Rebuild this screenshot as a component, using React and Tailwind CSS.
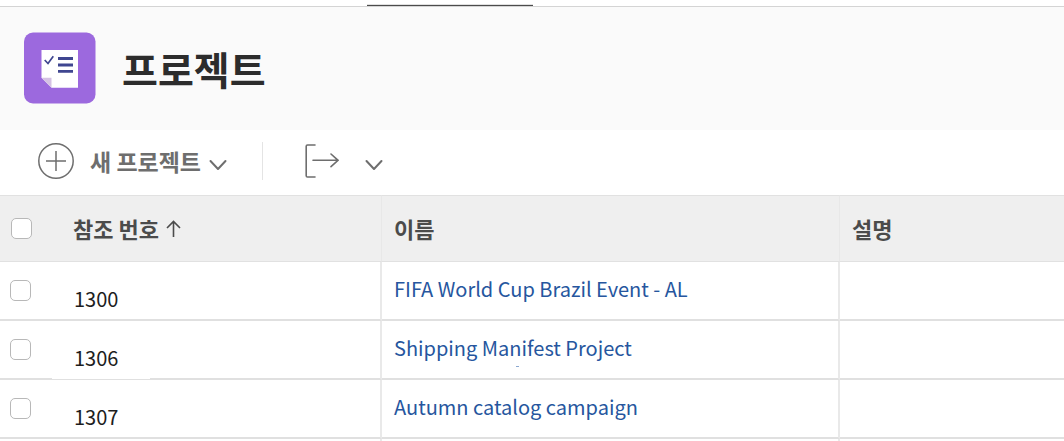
const rows = [
  { ref: "1300", name: "FIFA World Cup Brazil Event - AL" },
  { ref: "1306", name: "Shipping Manifest Project", marked: true },
  { ref: "1307", name: "Autumn catalog campaign" },
];

function ProjectIcon() {
  return (
    <svg className="size-[72px] shrink-0" viewBox="0 0 72 72" aria-hidden="true">
      <rect y="0.5" width="71.5" height="71" rx="9" fill="#9c69de" />
      <path d="M17.5 18H54v37.7H27.5l-10-10z" fill="#fff" />
      <path d="M17.5 45.7h10v10z" fill="#d5c2e4" />
      <path d="M20.7 28l3.3 3.5 5.3-7.2" fill="none" stroke="#3f4690" strokeWidth="1.7" />
      <path d="M34 26.5h15M34 33h15M34 39.3h15" stroke="#3f4690" strokeWidth="2.8" />
    </svg>
  );
}

function Chevron() {
  return (
    <svg className="mt-2 h-3 w-[18px]" viewBox="0 0 18 12" fill="none" stroke="#6e6e6e" strokeWidth="2" strokeLinecap="round" strokeLinejoin="round" aria-hidden="true">
      <path d="M1.5 2L9 10l7.5-8" />
    </svg>
  );
}

function Tick({ label }) {
  return (
    <input
      type="checkbox"
      aria-label={label}
      className="block size-[21px] appearance-none rounded-[5px] border border-[#b8b8b8] bg-white checked:bg-[#26569e]"
    />
  );
}

export default function App() {
  return (
    <div className="bg-white font-['Noto_Sans_CJK_KR','Noto_Sans',sans-serif] text-[#222]">
      <nav className="flex h-[7px] items-end border-b border-[#d4d4d4]" aria-label="탭">
        <div className="ml-[367px] h-[2px] w-[166px] border-b border-[#4b4b4b] bg-[#e0e0e0]" />
      </nav>
      <header className="flex items-center gap-[26px] bg-[#fafafa] px-6 pt-[25px] pb-[26px]">
        <ProjectIcon />
        <h1 className="text-[39px] leading-[72px] font-bold text-[#2c2c2c]">프로젝트</h1>
      </header>
      <div className="flex h-[65px] items-center pb-1 pl-[38px]">
        <button type="button" className="flex items-center gap-2 text-[#6e6e6e]">
          <svg className="mr-2 size-9" viewBox="0 0 36 36" fill="none" stroke="#6e6e6e" strokeWidth="1.5" aria-hidden="true">
            <circle cx="18" cy="18" r="17.2" />
            <path d="M8 18h20M18 8v20" />
          </svg>
          <span className="text-[23px] leading-8 font-bold">새 프로젝트</span>
          <Chevron />
        </button>
        <div className="mx-[35px] h-[38px] w-px bg-[#e4e4e4]" />
        <button type="button" aria-label="내보내기" className="flex items-center gap-[26px]">
          <svg className="ml-[7px] size-[34px]" viewBox="0 0 34 34" fill="none" stroke="#6e6e6e" strokeWidth="1.6" strokeLinecap="round" aria-hidden="true">
            <path d="M10 1H2.5Q1.2 1 1.2 2.3v29.4Q1.2 33 2.5 33H10" />
            <path d="M8 16.3h25M26 10l7 6.3-7 6.3" />
          </svg>
          <Chevron />
        </button>
      </div>
      <table className="w-full table-fixed border-separate border-spacing-0">
        <colgroup>
          <col className="w-[52px]" />
          <col className="w-[330px]" />
          <col className="w-[458px]" />
          <col />
        </colgroup>
        <thead>
          <tr className="h-[67px] bg-[#efefef] text-left text-[22px] text-[#4b4b4b] [&>th]:border-y [&>th]:border-r-[#e8e8e8] [&>th]:border-y-[#e1e1e1] [&>th]:p-0 [&>th]:font-bold">
            <th scope="col">
              <div className="pl-[11px]">
                <Tick label="모두 선택" />
              </div>
            </th>
            <th scope="col" className="border-r">
              <button type="button" className="flex items-center gap-[7px] pl-[21px] font-bold">
                참조 번호
                <svg className="h-[18px] w-[15px]" viewBox="0 0 15 18" fill="none" stroke="#4b4b4b" strokeWidth="1.6" aria-hidden="true">
                  <path d="M7.5 17V1.5M1 8l6.5-6.5L14 8" />
                </svg>
              </button>
            </th>
            <th scope="col" className="border-r">
              <div className="pl-3">이름</div>
            </th>
            <th scope="col">
              <div className="pl-3">설명</div>
            </th>
          </tr>
        </thead>
        <tbody className="text-[20px]">
          {rows.map((row) => (
            <tr key={row.ref} className="h-[59px] [&>td]:border-b-2 [&>td]:border-r-[#e9e9e9] [&>td]:border-b-[#e0e0e0] [&>td]:p-0">
              <td>
                <div className="pl-[10px]">
                  <Tick label={row.name} />
                </div>
              </td>
              <td className="relative border-r-2">
                <div className="pt-4 pl-[22px] leading-8 text-[#1d1d1d]">{row.ref}</div>
                {row.marked && <span className="absolute -bottom-px left-0 h-px w-[98px] bg-white" />}
              </td>
              <td className="relative border-r-2">
                <a href="#" className="block pb-1 pl-3 leading-8 text-[#26569e]">
                  {row.name}
                </a>
                {row.marked && <span className="absolute bottom-[11px] left-[134px] h-px w-[3px] bg-[#8ba8d0]" />}
              </td>
              <td />
            </tr>
          ))}
          <tr className="h-[2px] [&>td]:border-[#e9e9e9] [&>td]:p-0">
            <td />
            <td className="border-r-2" />
            <td className="border-r-2" />
            <td />
          </tr>
        </tbody>
      </table>
    </div>
  );
}
